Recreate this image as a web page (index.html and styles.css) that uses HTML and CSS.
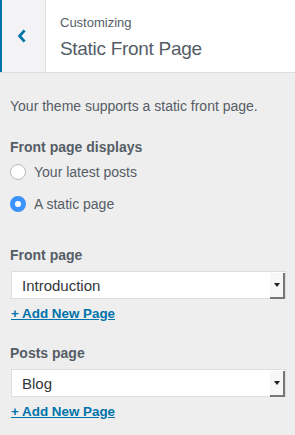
FILE: index.html
```html
<!doctype html>
<html>
<head>
<meta charset="utf-8">
<title>Static Front Page</title>
<link rel="stylesheet" href="styles.css">
</head>
<body>
	<div class="panel">
		<div class="header">
			<span class="back">
				<svg width="10" height="14" viewBox="0 0 10 14"><path d="M7.6 1.4 L2.6 7 L7.6 12.6" fill="none" stroke="#0073aa" stroke-width="2.8"/></svg>
			</span>
			<div class="title">
				<span class="sub">Customizing</span>
				<h1>Static Front Page</h1>
			</div>
		</div>

		<div class="content">
			<p class="desc">Your theme supports a static front page.</p>

			<div class="group">
				<h3>Front page displays</h3>
				<label class="radio"><span class="dot"></span>Your latest posts</label>
				<label class="radio"><span class="dot checked"></span>A static page</label>
			</div>

			<div class="group pick">
				<h3>Front page</h3>
				<div class="select"><span>Introduction</span><i class="arrow"></i></div>
				<a href="#" class="add">+ Add New Page</a>
			</div>

			<div class="group pick">
				<h3>Posts page</h3>
				<div class="select"><span>Blog</span><i class="arrow"></i></div>
				<a href="#" class="add">+ Add New Page</a>
			</div>
		</div>
	</div>
</body>
</html>
```

FILE: styles.css
```css
	*{
		padding: 0;
		margin: 0;
		box-sizing: border-box;
	}
	body{
		background: #eee;
		font-family: "Liberation Sans", Arial, sans-serif;
		color: #555d66;
		width: 295px;
		height: 435px;
		overflow: hidden;
	}
	.header{
		height: 73px;
		background: #fff;
		border-bottom: 1px solid #ddd;
		display: flex;
	}
	.header .back{
		width: 46px;
		background: #f3f3f5;
		border-left: 2px solid #0073aa;
		border-right: 1px solid #ddd;
		display: flex;
		align-items: center;
		justify-content: center;
		padding-right: 4px;
	}
	.header .title{
		padding: 15px 0 0 14px;
	}
	.header .sub{
		display: block;
		font-size: 13px;
		line-height: 16px;
	}
	.header h1{
		font-weight: normal;
		font-size: 19px;
		letter-spacing: -0.3px;
		line-height: 24px;
		margin-top: 6px;
	}
	.content{
		padding: 24px 10px 0 10px;
	}
	.desc{
		font-size: 14px;
		line-height: 18px;
	}
	.group{
		margin-top: 23px;
	}
	.group h3{
		font-size: 14px;
		font-weight: bold;
		line-height: 18px;
	}
	.radio{
		display: flex;
		align-items: center;
		font-size: 14px;
		height: 24px;
		margin-top: 4px;
	}
	.radio + .radio{
		margin-top: 8px;
	}
	.dot{
		width: 16px;
		height: 16px;
		border-radius: 50%;
		border: 1px solid #b4b9be;
		background: #fff;
		margin-right: 8px;
	}
	.dot.checked{
		border: 5px solid #3b93fb;
	}
	.pick{
		margin-top: 30px;
	}
	.pick + .pick{
		margin-top: 22px;
	}
	.select{
		margin: 7px 0 0 1px;
		height: 28px;
		width: 275px;
		background: #fff;
		border: 1px solid #ddd;
		display: flex;
		align-items: center;
		font-size: 15px;
		color: #32373c;
		padding-left: 10px;
	}
	.select span{
		flex: 1;
	}
	.select .arrow{
		width: 15px;
		height: 26px;
		background: #f7f7f7;
		border-right: 2px solid #777;
		border-bottom: 2px solid #777;
		display: flex;
		align-items: center;
		justify-content: center;
		margin-top: 1px;
	}
	.select .arrow::after{
		content: "";
		border-left: 3px solid transparent;
		border-right: 3px solid transparent;
		border-top: 4px solid #222;
	}
	.add{
		display: inline-block;
		margin: 7px 0 0 1px;
		font-size: 13.4px;
		line-height: 16px;
		font-weight: bold;
		color: #0073aa;
		text-decoration: underline;
	}
```
